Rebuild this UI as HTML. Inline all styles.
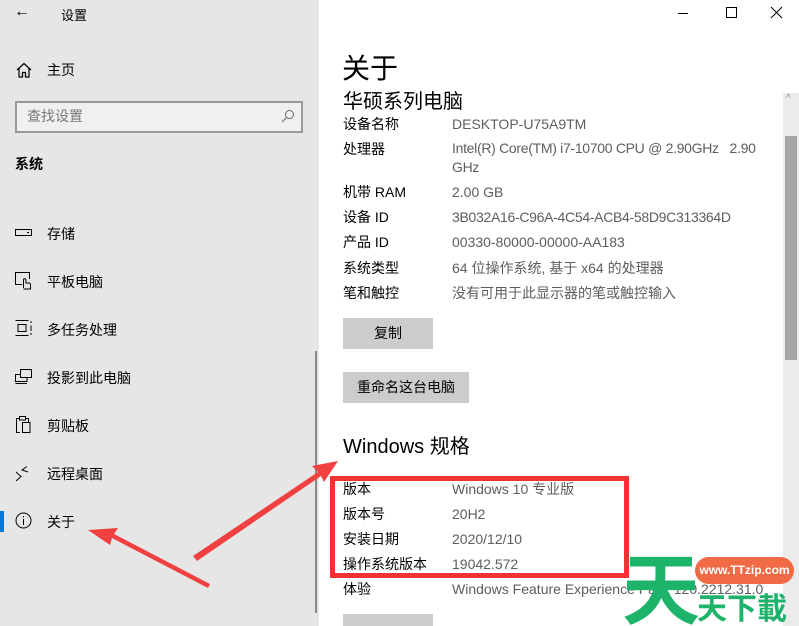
<!DOCTYPE html>
<html><head><meta charset="utf-8"><style>
*{margin:0;padding:0;box-sizing:border-box}
html{width:799px;height:626px;overflow:hidden}
body{width:799px;height:626px;overflow:hidden;position:relative;background:#fff;font-family:"Liberation Sans","Noto Sans CJK SC",sans-serif;color:#000}
.a{position:absolute;white-space:nowrap}
#side{position:absolute;left:0;top:0;width:319px;height:626px;background:#e6e6e6}
.nav{position:absolute;left:47px;font-size:14px;line-height:20px}
.lb{position:absolute;left:343px;font-size:14px;line-height:20px}
.vl{position:absolute;left:452px;font-size:14px;line-height:20px;color:#5d5d5d}
.btn{position:absolute;left:343px;height:31px;background:#cccccc;font-size:14px;line-height:31px;text-align:center}
</style></head><body>
<div id="side">
<div class="a" style="left:14px;top:3px;font-size:16px">←</div>
<div class="a" style="left:61px;top:5px;font-size:13px">设置</div>
<svg class="a" style="left:16px;top:62px" width="16" height="16" viewBox="0 0 16 16" fill="none" stroke="#000" stroke-width="1.2"><path d="M1 8 L8 1.5 L15 8 M3 6.5 V15 H6.5 V10.5 H9.5 V15 H13 V6.5"/></svg>
<div class="nav" style="top:60px">主页</div>
<div class="a" style="left:15px;top:101px;width:288px;height:32px;border:2px solid #999;background:#f0f0f0"></div>
<div class="a" style="left:27px;top:106px;font-size:14px;color:#777;line-height:20px">查找设置</div>
<svg class="a" style="left:281px;top:109px" width="14" height="14" viewBox="0 0 14 14" fill="none" stroke="#666" stroke-width="1"><circle cx="8.5" cy="5.5" r="4"/><path d="M5.5 8.5 L1 13"/></svg>
<div class="a" style="left:15px;top:154px;font-size:14px;font-weight:bold;line-height:20px">系统</div>
<svg class="a" style="left:15px;top:229px" width="18" height="8"><rect x="0.5" y="0.5" width="16" height="6" fill="none" stroke="#000"/><rect x="12" y="3" width="2" height="1" fill="#000"/></svg>
<div class="nav" style="top:224px">存储</div>
<svg class="a" style="left:15px;top:272px" width="18" height="18" fill="none" stroke="#000"><path d="M7 12.5 H0.5 V0.5 H14.5 V7"/><path d="M8.5 16 V8 a1.2 1.2 0 0 1 2.4 0 V11 H14 a1.5 1.5 0 0 1 1.5 1.5 V17 H8.5"/></svg>
<div class="nav" style="top:272px">平板电脑</div>
<svg class="a" style="left:15px;top:320px" width="18" height="18" fill="none" stroke="#000"><path d="M0.5 0.5 H13.5 M0.5 15.5 H13.5 M3 4.5 H11 V11.5 H3 Z"/><path d="M16 1 V3 M16 5.5 V11 M16 13 V15"/></svg>
<div class="nav" style="top:320px">多任务处理</div>
<svg class="a" style="left:15px;top:369px" width="18" height="16" fill="none" stroke="#000"><rect x="5.5" y="0.5" width="11" height="8"/><path d="M5.5 5.5 H0.5 V12.5 H12 V8.5 M0.5 14.5 H12"/></svg>
<div class="nav" style="top:368px">投影到此电脑</div>
<svg class="a" style="left:15px;top:416px" width="18" height="18" fill="none" stroke="#000"><path d="M5 2.5 H1.5 V16.5 H5 M11 2.5 H13.5 V6"/><rect x="4.5" y="0.5" width="6" height="3.5"/><rect x="7.5" y="6.5" width="7.5" height="10"/></svg>
<div class="nav" style="top:416px">剪贴板</div>
<svg class="a" style="left:15px;top:465px" width="18" height="18" fill="none" stroke="#000"><path d="M1 7 L6 11.5 L1 16 M12 1.5 L7 5 L13 7"/></svg>
<div class="nav" style="top:464px">远程桌面</div>
<div class="a" style="left:0;top:511px;width:4px;height:21px;background:#0078d7"></div>
<svg class="a" style="left:15px;top:512px" width="17" height="17" fill="none" stroke="#000"><circle cx="8.5" cy="8.5" r="7.5"/><path d="M8.5 7 V13 M8.5 4 V5.5"/></svg>
<div class="nav" style="top:512px">关于</div>
<div class="a" style="left:315px;top:351px;width:2px;height:262px;background:#888"></div>
</div>
<svg class="a" style="left:676px;top:5px" width="110" height="16" fill="none" stroke="#000"><path d="M2 8.5 H12"/><rect x="50.5" y="2.5" width="10" height="10"/><path d="M95 2 L106 13 M106 2 L95 13"/></svg>
<div class="a" style="left:342px;top:51px;font-size:28px;line-height:36px">关于</div>
<div class="a" style="left:343px;top:88px;font-size:20px;line-height:28px">华硕系列电脑</div>
<div class="lb" style="top:114px">设备名称</div><div class="vl" style="top:114px">DESKTOP-U75A9TM</div>
<div class="lb" style="top:139px">处理器</div><div class="vl" style="top:139px;line-height:19px;letter-spacing:-0.3px">Intel(R) Core(TM) i7-10700 CPU @ 2.90GHz&nbsp;&nbsp;&nbsp;2.90<br>GHz</div>
<div class="lb" style="top:182px">机带 RAM</div><div class="vl" style="top:182px">2.00 GB</div>
<div class="lb" style="top:207px">设备 ID</div><div class="vl" style="top:207px;letter-spacing:-0.3px">3B032A16-C96A-4C54-ACB4-58D9C313364D</div>
<div class="lb" style="top:232px">产品 ID</div><div class="vl" style="top:232px">00330-80000-00000-AA183</div>
<div class="lb" style="top:258px">系统类型</div><div class="vl" style="top:258px">64 位操作系统, 基于 x64 的处理器</div>
<div class="lb" style="top:283px">笔和触控</div><div class="vl" style="top:283px">没有可用于此显示器的笔或触控输入</div>
<div class="btn" style="top:318px;width:90px">复制</div>
<div class="btn" style="top:372px;width:126px">重命名这台电脑</div>
<div class="a" style="left:343px;top:433px;font-size:20px;line-height:28px">Windows 规格</div>
<div class="lb" style="top:479px">版本</div><div class="vl" style="top:479px">Windows 10 专业版</div>
<div class="lb" style="top:504px">版本号</div><div class="vl" style="top:504px">20H2</div>
<div class="lb" style="top:529px">安装日期</div><div class="vl" style="top:529px">2020/12/10</div>
<div class="lb" style="top:554px">操作系统版本</div><div class="vl" style="top:554px">19042.572</div>
<div class="lb" style="top:579px">体验</div><div class="vl" style="top:579px">Windows Feature Experience Pack 120.2212.31.0</div>
<div class="btn" style="top:614px;width:90px;height:12px"></div>
<div class="a" style="left:330px;top:476px;width:299px;height:102px;border:5px solid #ee3333"></div>
<div class="a" style="left:783px;top:93px;width:16px;height:533px;background:#ebebeb"></div>
<div class="a" style="left:785px;top:136px;width:12px;height:224px;background:#a6a6a6"></div>
<div class="a" style="left:786px;top:93px;font-size:10px;color:#888">^</div>
<svg class="a" style="left:0;top:0" width="799" height="626">
<polygon points="193,556 318,472 312,466 338,461 324,482 321,476 197,561" fill="#f04040"/>
<polygon points="208,588 112,538 110,545 88,530 118,528 114,534 210,584" fill="#f04040"/>
</svg>
<div class="a" style="left:622px;top:545px;font-size:78px;line-height:80px;font-weight:bold;color:#1db36a;font-family:'Noto Sans CJK SC',sans-serif">天</div>
<div class="a" style="left:695px;top:557px;width:99px;height:27px;border-radius:14px;background:#f06a45;color:#fff;font-size:12px;font-weight:bold;line-height:27px;text-align:center">www.TTzip.com</div>
<div class="a" style="left:697px;top:588px;font-size:30px;line-height:36px;font-weight:bold;color:#1db36a;font-family:'Noto Sans CJK SC',sans-serif">天下載</div>
</body></html>
